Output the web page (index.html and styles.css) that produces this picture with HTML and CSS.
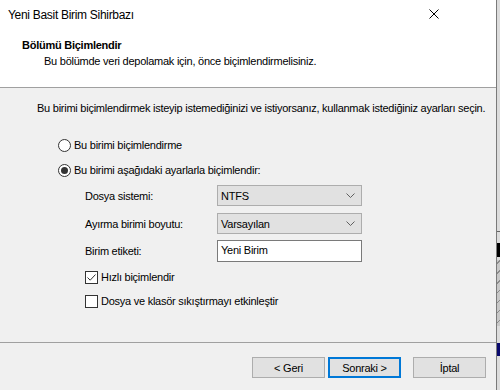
FILE: index.html
```html
<!DOCTYPE html>
<html lang="tr">
<head>
    <meta charset="UTF-8">
    <title>Yeni Basit Birim Sihirbazı</title>
    <link rel="stylesheet" href="styles.css">
</head>
<body>
    <div class="screen">
        <div class="window">
            <div class="titlebar">
                <span class="title">Yeni Basit Birim Sihirbazı</span>
                <svg class="close" width="10" height="10" viewBox="0 0 10 10">
                    <path d="M0.5 0.5 L9.5 9.5 M9.5 0.5 L0.5 9.5" stroke="#000" stroke-width="1" fill="none"/>
                </svg>
            </div>

            <div class="header">
                <div class="header-title">Bölümü Biçimlendir</div>
                <div class="header-sub">Bu bölümde veri depolamak için, önce biçimlendirmelisiniz.</div>
            </div>

            <div class="content">
                <p class="intro">Bu birimi biçimlendirmek isteyip istemediğinizi ve istiyorsanız, kullanmak istediğiniz ayarları seçin.</p>

                <label class="radio-row">
                    <span class="radio"></span>
                    Bu birimi biçimlendirme
                </label>
                <label class="radio-row">
                    <span class="radio checked"></span>
                    Bu birimi aşağıdaki ayarlarla biçimlendir:
                </label>

                <div class="options">
                    <div class="field">
                        <span class="field-label">Dosya sistemi:</span>
                        <div class="combo">
                            <span>NTFS</span>
                            <svg width="9" height="5" viewBox="0 0 9 5"><path d="M0.5 0.5 L4.5 4.5 L8.5 0.5" stroke="#606060" fill="none"/></svg>
                        </div>
                    </div>
                    <div class="field">
                        <span class="field-label">Ayırma birimi boyutu:</span>
                        <div class="combo">
                            <span>Varsayılan</span>
                            <svg width="9" height="5" viewBox="0 0 9 5"><path d="M0.5 0.5 L4.5 4.5 L8.5 0.5" stroke="#606060" fill="none"/></svg>
                        </div>
                    </div>
                    <div class="field field-input">
                        <span class="field-label">Birim etiketi:</span>
                        <div class="textbox">Yeni Birim</div>
                    </div>

                    <label class="check-row first">
                        <span class="checkbox">
                            <svg width="11" height="11" viewBox="0 0 11 11"><path d="M1.5 5.5 L4.2 8.2 L9.5 2.5" stroke="#333" stroke-width="1" fill="none"/></svg>
                        </span>
                        Hızlı biçimlendir
                    </label>
                    <label class="check-row">
                        <span class="checkbox"></span>
                        Dosya ve klasör sıkıştırmayı etkinleştir
                    </label>
                </div>
            </div>

            <div class="footer">
                <button class="btn">&lt; Geri</button>
                <button class="btn btn-default">Sonraki &gt;</button>
                <button class="btn btn-cancel">İptal</button>
            </div>
        </div>

        <div class="desktop">
            <div class="desk-line"></div>
            <div class="desk-black"></div>
            <div class="desk-hatch"></div>
            <div class="desk-blue"></div>
        </div>
    </div>
</body>
</html>
```

FILE: styles.css
```css
body {
    margin: 0;
    padding: 0;
    font-family: "Liberation Sans", Arial, sans-serif;
    font-size: 11px;
    letter-spacing: -0.25px;
    color: #000;
}

.screen {
    display: flex;
    width: 500px;
    height: 390px;
    overflow: hidden;
}

.window {
    width: 496px;
    height: 390px;
    border-right: 1px solid #7a7a7a;
    background-color: #f0f0f0;
    display: flex;
    flex-direction: column;
}

.titlebar {
    height: 29px;
    background-color: #fff;
    display: flex;
    align-items: center;
    justify-content: space-between;
    padding: 0 57px 0 8px;
}

.title {
    font-size: 12px;
    letter-spacing: -0.3px;
    margin-top: 1px;
}

.close {
    margin-top: -2px;
}

.header {
    height: 59px;
    background-color: #fff;
    border-bottom: 1px solid #a0a0a0;
    box-sizing: border-box;
}

.header-title {
    font-weight: bold;
    padding: 8px 0 0 22px;
    line-height: 16px;
}

.header-sub {
    padding-left: 44px;
    line-height: 16px;
}

.content {
    height: 254px;
    border-bottom: 1px solid #a0a0a0;
}

.intro {
    margin: 12px 0 0 37px;
    line-height: 16px;
}

.radio-row {
    display: flex;
    align-items: center;
    gap: 3px;
    margin-left: 58px;
    height: 16px;
}

.radio-row:first-of-type {
    margin-top: 21px;
}

.radio-row + .radio-row {
    margin-top: 9px;
}

.radio {
    width: 11px;
    height: 11px;
    border: 1px solid #333;
    border-radius: 50%;
    background-color: #fff;
    position: relative;
}

.radio.checked::after {
    content: "";
    position: absolute;
    left: 2px;
    top: 2px;
    width: 7px;
    height: 7px;
    border-radius: 50%;
    background-color: #333;
}

.options {
    margin: 7px 0 0 85px;
}

.field {
    display: flex;
    align-items: center;
    height: 21px;
    margin-bottom: 7px;
}

.field-input {
    height: 22px;
    margin-top: -1px;
}

.field-label {
    width: 132px;
}

.combo {
    width: 145px;
    height: 21px;
    background-color: #e1e1e1;
    border: 1px solid #adadad;
    display: flex;
    align-items: center;
    justify-content: space-between;
    padding: 0 6px 0 3px;
    box-sizing: border-box;
}

.textbox {
    width: 145px;
    height: 22px;
    box-sizing: border-box;
    background-color: #fff;
    border: 1px solid #7a7a7a;
    padding: 3px 3px;
}

.check-row {
    display: flex;
    align-items: center;
    gap: 3px;
    height: 16px;
}

.check-row.first {
    margin-top: 2px;
    margin-bottom: 8px;
}

.checkbox {
    width: 11px;
    height: 11px;
    border: 1px solid #333;
    background-color: #fff;
    display: flex;
    align-items: center;
    justify-content: center;
}

.footer {
    display: flex;
    padding: 14px 0 0 252px;
}

.btn {
    width: 73px;
    height: 21px;
    background-color: #e1e1e1;
    border: 1px solid #adadad;
    font-family: "Liberation Sans", Arial, sans-serif;
    font-size: 11px;
    letter-spacing: -0.25px;
    color: #000;
    padding: 0;
}

.btn-default {
    border: 2px solid #0078d7;
    margin-left: 3px;
}

.btn-cancel {
    margin-left: 12px;
}

.desktop {
    width: 3px;
    height: 390px;
    background-color: #dcdcdc;
    display: flex;
    flex-direction: column;
}

.desk-line {
    height: 1px;
    margin-top: 231px;
    background-color: #666;
}

.desk-black {
    height: 14px;
    margin-top: 11px;
    background-color: #000;
}

.desk-hatch {
    height: 66px;
    margin-top: 3px;
    background: repeating-linear-gradient(135deg, #c8c8c8 0 2px, #8a8a8a 2px 3px, #c8c8c8 3px 7px);
}

.desk-blue {
    height: 13px;
    margin-top: 17px;
    background-color: #0a0a6e;
}
```
